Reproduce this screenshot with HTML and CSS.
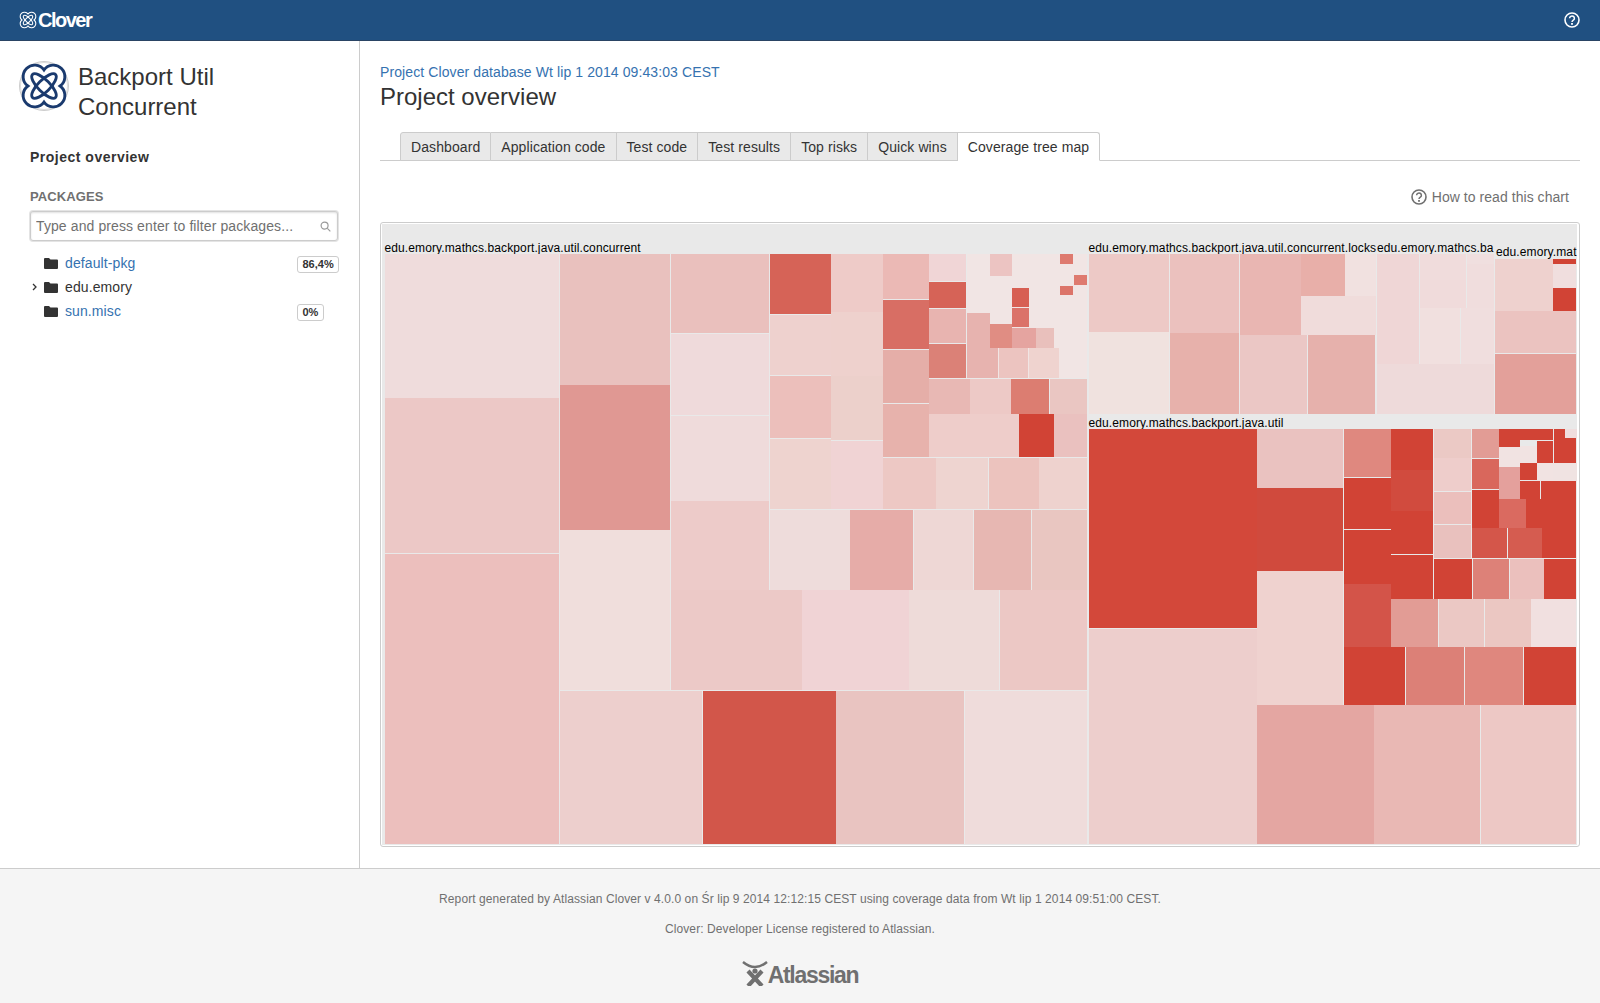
FILE: index.html
```html
<!DOCTYPE html>
<html lang="en">
<head>
    <meta charset="UTF-8">
    <title>Coverage tree map</title>
    <link rel="stylesheet" href="styles.css">
</head>
<body>
    <svg class="defs" width="0" height="0">
        <symbol id="clover" viewBox="-25 -25 50 50">
            <g fill="none" stroke="currentColor">
                <path d="M0 -16.75A12 12 0 1 1 16.75 0A12 12 0 1 1 0 16.75A12 12 0 1 1 -16.75 0A12 12 0 1 1 0 -16.75Z"/>
                <ellipse rx="6.2" ry="17" transform="rotate(45)"/>
                <ellipse rx="6.2" ry="17" transform="rotate(-45)"/>
            </g>
        </symbol>
        <symbol id="help" viewBox="0 0 16 16">
            <circle cx="8" cy="8" r="7" fill="none" stroke="currentColor" stroke-width="1.6"/>
            <path d="M5.6 6.3a2.4 2.3 0 1 1 3.7 1.9c-.9.6-1.3 1-1.3 1.9" fill="none" stroke="currentColor" stroke-width="1.5"/>
            <rect x="7.1" y="11" width="1.8" height="1.8" fill="currentColor"/>
        </symbol>
        <symbol id="folder" viewBox="0 0 14 11">
            <path d="M0 1a1 1 0 0 1 1-1h4l1.5 1.6H13a1 1 0 0 1 1 1V10a1 1 0 0 1-1 1H1a1 1 0 0 1-1-1Z" fill="currentColor"/>
        </symbol>
    </svg>

    <header class="topbar">
        <a class="brand">
            <svg class="brand-icon"><use href="#clover"/></svg>
            <span class="brand-name">Clover</span>
        </a>
        <svg class="topbar-help"><use href="#help"/></svg>
    </header>

    <div class="layout">
        <aside class="sidebar">
            <div class="project">
                <span class="project-logo"><svg><use href="#clover"/></svg></span>
                <h1 class="project-name">Backport Util Concurrent</h1>
            </div>
            <div class="side-link">Project overview</div>
            <h2 class="side-heading">PACKAGES</h2>
            <div class="filter">
                <input type="text" placeholder="Type and press enter to filter packages...">
                <svg class="filter-icon" viewBox="0 0 12 12">
                    <circle cx="5" cy="5" r="3.8"/>
                    <path d="M8 8l3.3 3.3"/>
                </svg>
            </div>
            <ul class="tree">
                <li class="tree-row">
                    <span class="tree-arrow"></span>
                    <svg class="tree-folder"><use href="#folder"/></svg>
                    <a class="tree-link">default-pkg</a>
                    <span class="badge">86,4%</span>
                </li>
                <li class="tree-row">
                    <span class="tree-arrow">
                        <svg viewBox="0 0 5 8"><path d="M1 1l3 3-3 3"/></svg>
                    </span>
                    <svg class="tree-folder"><use href="#folder"/></svg>
                    <span class="tree-text">edu.emory</span>
                </li>
                <li class="tree-row">
                    <span class="tree-arrow"></span>
                    <svg class="tree-folder"><use href="#folder"/></svg>
                    <a class="tree-link">sun.misc</a>
                    <span class="badge">0%</span>
                </li>
            </ul>
        </aside>

        <main class="content">
            <a class="db-link">Project Clover database Wt lip 1 2014 09:43:03 CEST</a>
            <h1 class="page-title">Project overview</h1>
            <nav class="tabs">
                <a class="tab">Dashboard</a>
                <a class="tab">Application code</a>
                <a class="tab">Test code</a>
                <a class="tab">Test results</a>
                <a class="tab">Top risks</a>
                <a class="tab">Quick wins</a>
                <a class="tab active">Coverage tree map</a>
            </nav>
            <div class="chart-help">
                <svg><use href="#help"/></svg>
                <span>How to read this chart</span>
            </div>
            <div class="chart">
                <div class="treemap" id="treemap"></div>
            </div>
        </main>
    </div>

    <footer class="footer">
        <p>Report generated by Atlassian Clover v 4.0.0 on Śr lip 9 2014 12:12:15 CEST using coverage data from Wt lip 1 2014 09:51:00 CEST.</p>
        <p>Clover: Developer License registered to Atlassian.</p>
        <div class="atlassian">
            <svg viewBox="0 0 26 25">
                <path d="M1 1Q13 11 25 1" fill="none" stroke="currentColor" stroke-width="2.4"/>
                <circle cx="13" cy="10" r="2.6" fill="currentColor"/>
                <path d="M6 10L20 25M20 10L6 25" stroke="currentColor" stroke-width="4.2"/>
            </svg>
            <span>Atlassian</span>
        </div>
    </footer>

    <script src="treemap.js"></script>
</body>
</html>
```

FILE: styles.css
```css
* { box-sizing: border-box; }
body {
    margin: 0;
    min-height: 100vh;
    display: flex;
    flex-direction: column;
    font-family: 'Liberation Sans', Arial, sans-serif;
    font-size: 14px;
    letter-spacing: 0.1px;
    color: #333;
    background: white;
}
.defs { position: absolute; }

.topbar {
    height: 41px;
    display: flex;
    align-items: center;
    justify-content: space-between;
    padding: 0 20px 0 19px;
    background: #205081;
    border-bottom: 1px solid #2a4464;
    color: white;
}
.brand { display: flex; align-items: center; gap: 1px; }
.brand-icon { width: 18px; height: 18px; stroke-width: 3; }
.brand-name { font-size: 20px; font-weight: bold; letter-spacing: -1.5px; }
.topbar-help { width: 16px; height: 16px; }

.layout { flex: 1; display: flex; }
.sidebar {
    width: 360px;
    padding: 20px 20px 0 19px;
    border-right: 1px solid #ccc;
}
.project { display: flex; gap: 9px; }
.project-logo {
    width: 50px;
    height: 50px;
    flex: none;
    border: 1px solid #ccc;
    border-radius: 50%;
    box-shadow: inset 0 0 0 1px #ddd;
    color: #1a3a6e;
    stroke-width: 3;
}
.project-logo svg { display: block; width: 48px; height: 48px; }
.project-name {
    margin: 1px 0 0;
    width: 190px;
    font-size: 24px;
    font-weight: normal;
    line-height: 30px;
    letter-spacing: 0;
}
.side-link {
    margin: 25px 0 0 11px;
    font-weight: bold;
    line-height: 20px;
    letter-spacing: 0.5px;
}
.side-heading {
    margin: 21px 0 0 11px;
    font-size: 13px;
    line-height: 18px;
    color: #707070;
}
.filter { position: relative; margin: 5px 0 0 11px; width: 308px; }
.filter input {
    display: block;
    width: 100%;
    height: 30px;
    padding: 0 5px;
    border: 1px solid #ccc;
    border-radius: 3px;
    box-shadow: inset 0 1px 2px rgba(0, 0, 0, 0.12), 0 0 0 1px #e4e4e4;
    font-family: inherit;
    font-size: 14px;
    letter-spacing: 0.1px;
}
.filter input::placeholder { color: #707070; opacity: 1; }
.filter-icon {
    position: absolute;
    right: 7px;
    top: 10px;
    width: 11px;
    height: 11px;
    fill: none;
    stroke: #999;
    stroke-width: 1.3;
}
.tree { list-style: none; margin: 10px 0 0; padding: 0; }
.tree-row { display: flex; align-items: center; height: 24px; }
.tree-arrow { width: 25px; padding-left: 13px; display: flex; }
.tree-arrow svg { width: 5px; height: 8px; fill: none; stroke: #333; stroke-width: 1.3; }
.tree-folder { width: 14px; height: 11px; color: #333; margin-right: 7px; }
.tree-link { color: #3572b0; }
.tree-text { color: #333; }
.badge {
    position: absolute;
    left: 297px;
    margin-top: 2px;
    padding: 0 4.5px;
    height: 17px;
    border: 1px solid #ccc;
    border-radius: 3px;
    background: white;
    font-size: 11px;
    font-weight: bold;
    line-height: 15px;
    letter-spacing: 0;
}

.content { flex: 1; padding: 21px 20px 21px 20px; min-width: 0; }
.db-link { display: block; color: #3572b0; line-height: 20px; }
.page-title {
    margin: 0;
    font-size: 24px;
    font-weight: normal;
    line-height: 30px;
    letter-spacing: 0;
}
.tabs {
    display: flex;
    margin-top: 20px;
    padding-left: 20px;
    border-bottom: 1px solid #ccc;
    height: 29px;
}
.tab {
    height: 29px;
    padding: 0 10px;
    background: #e9e9e9;
    border: 1px solid #ccc;
    border-left-width: 0;
    line-height: 28px;
    letter-spacing: 0.09px;
    color: #333;
}
.tab:first-child { border-left-width: 1px; border-top-left-radius: 3px; }
.tab:last-child { border-top-right-radius: 3px; }
.tab.active { background: white; border-bottom-color: white; }
.chart-help {
    display: flex;
    justify-content: flex-end;
    align-items: center;
    gap: 5px;
    height: 20px;
    margin-top: 26px;
    padding-right: 11px;
    letter-spacing: 0.05px;
    color: #707070;
}
.chart-help svg { width: 16px; height: 16px; }
.chart {
    height: 625px;
    margin-top: 15px;
    padding: 1px 2px 1px 1px;
    border: 1px solid #ccc;
    border-radius: 3px;
}
.treemap {
    position: relative;
    height: 100%;
    overflow: hidden;
    background: #e9e9e9;
}
.tm-label {
    position: absolute;
    height: 14px;
    white-space: nowrap;
    font-size: 12px;
    line-height: 14px;
    letter-spacing: 0.11px;
    color: black;
}
.tm-cell { position: absolute; }

.footer {
    height: 135px;
    padding-top: 23px;
    background: #f5f5f5;
    border-top: 1px solid #ccc;
    text-align: center;
    font-size: 12px;
    line-height: 14px;
    letter-spacing: 0.09px;
    color: #707070;
}
.footer p { margin: 0 0 16px; }
.atlassian {
    display: inline-flex;
    align-items: flex-end;
    margin-top: 9px;
    color: #707070;
}
.atlassian svg { width: 26px; height: 25px; }
.atlassian span {
    font-size: 23px;
    font-weight: bold;
    line-height: 22px;
    letter-spacing: -1.3px;
}
```

FILE: treemap.js
```js
// all coordinates are page pixels: x1, y1, x2, y2, colour
const ORIGIN_X = 382;
const ORIGIN_Y = 224;

const labels = [
    [384.5, 241, 'edu.emory.mathcs.backport.java.util.concurrent'],
    [1088.5, 241, 'edu.emory.mathcs.backport.java.util.concurrent.locks'],
    [1377, 241, 'edu.emory.mathcs.ba'],
    [1496, 245, 'edu.emory.mat'],
    [1088.5, 416, 'edu.emory.mathcs.backport.java.util']
];

const cells = [
    // concurrent, big columns
    [385, 254, 559, 398, '#efdcdc'],
    [385, 398, 559, 553, '#ecc8c6'],
    [385, 554, 559, 844, '#ecbfbd'],
    [560, 254, 670, 385, '#e9c1be'],
    [560, 385, 670, 530, '#e09893'],
    [560, 530, 670, 690, '#f0dedc'],
    [671, 254, 769, 333, '#eac0bd'],
    [671, 334, 769, 415, '#efdadb'],
    [671, 416, 769, 501, '#efdbdb'],
    [671, 501, 769, 590, '#edcbc9'],
    [671, 590, 802, 690, '#ecc9c7'],
    [802, 590, 909, 690, '#f0d3d5'],
    [909, 590, 999, 690, '#eedbd9'],
    [1000, 590, 1087, 690, '#ecc8c5'],
    [560, 691, 702, 844, '#edcfcd'],
    [703, 691, 836, 844, '#d2564a'],
    [836, 691, 964, 844, '#e9c4c1'],
    [965, 691, 1087, 844, '#efdcdb'],
    [770, 510, 850, 590, '#eedcdb'],
    [850, 510, 913, 590, '#e6aca8'],
    [914, 510, 973, 590, '#eed7d5'],
    [974, 510, 1031, 590, '#e7b7b2'],
    [1032, 510, 1087, 590, '#e9c6c1'],

    // concurrent, middle
    [770, 254, 831, 314, '#d66357'],
    [770, 315, 831, 375, '#eed1ce'],
    [770, 376, 831, 438, '#ecbfbb'],
    [770, 439, 831, 509, '#eed3cf'],
    [831, 254, 883, 312, '#eecbc8'],
    [831, 312, 883, 376, '#eed1cd'],
    [831, 376, 883, 440, '#ecd0cb'],
    [831, 441, 883, 509, '#f0d3d4'],
    [883, 254, 929, 299, '#ebb9b5'],
    [883, 300, 929, 349, '#d86e64'],
    [883, 350, 929, 403, '#e5aea8'],
    [883, 404, 929, 457, '#e7b2ac'],
    [929, 254, 966, 281, '#f0d5d6'],
    [929, 282, 966, 308, '#d66357'],
    [929, 309, 966, 343, '#e8b4b0'],
    [929, 344, 966, 378, '#db8177'],

    // concurrent, smallest classes
    [967, 254, 1087, 378, '#f1e5e4'],
    [990, 254, 1012, 276, '#ecc4c2'],
    [1012, 288, 1029, 307, '#d75f53'],
    [1012, 308, 1029, 327, '#db7269'],
    [1060, 254, 1073, 264, '#de7a6f'],
    [1074, 275, 1087, 285, '#de7a6f'],
    [1060, 286, 1073, 295, '#dc7469'],
    [967, 313, 990, 348, '#e7b3af'],
    [967, 348, 998, 378, '#e7b3af'],
    [990, 324, 1012, 348, '#e08d83'],
    [1012, 328, 1036, 348, '#e5a4a0'],
    [1036, 328, 1054, 348, '#e9c0bc'],
    [999, 348, 1028, 378, '#ecc4c0'],
    [1029, 348, 1059, 378, '#efd3cf'],
    [929, 379, 970, 414, '#e8b8b4'],
    [970, 379, 1011, 414, '#edc9c6'],
    [1011, 379, 1049, 414, '#dc7d71'],
    [1050, 379, 1087, 414, '#eac6c2'],
    [929, 414, 1019, 457, '#eecdca'],
    [1019, 414, 1054, 457, '#d14335'],
    [1054, 414, 1087, 457, '#eac1bf'],
    [883, 458, 936, 509, '#edc8c4'],
    [936, 458, 988, 509, '#eed4d0'],
    [989, 458, 1039, 509, '#ecc3be'],
    [1039, 458, 1087, 509, '#eed2ce'],

    // locks
    [1089, 254, 1169, 332, '#edc9c6'],
    [1089, 332, 1169, 414, '#f0e2df'],
    [1170, 254, 1239, 333, '#ebc1be'],
    [1170, 333, 1239, 414, '#e7b1ab'],
    [1240, 254, 1301, 335, '#e9b6b2'],
    [1301, 254, 1345, 296, '#e8afa9'],
    [1345, 254, 1376, 296, '#f1e1e0'],
    [1301, 296, 1376, 335, '#f0dcdb'],
    [1240, 335, 1307, 414, '#ebc7c5'],
    [1308, 335, 1375, 414, '#e6b1ac'],

    // backport
    [1377, 254, 1419, 364, '#efd6d6'],
    [1420, 254, 1466, 280, '#f0dcdc'],
    [1420, 280, 1466, 308, '#f0dbdb'],
    [1467, 254, 1494, 264, '#f0dfdf'],
    [1467, 264, 1494, 308, '#f0dddd'],
    [1420, 308, 1460, 364, '#f1e0df'],
    [1461, 308, 1494, 364, '#f0dede'],
    [1377, 364, 1494, 414, '#eedada'],

    // edu.emory.mat...
    [1495, 259, 1553, 311, '#eed1ce'],
    [1553, 259, 1576, 264, '#d14335'],
    [1553, 264, 1576, 288, '#f0dede'],
    [1553, 288, 1576, 311, '#d14335'],
    [1495, 311, 1576, 353, '#ebc3c0'],
    [1495, 354, 1576, 414, '#e3a09a'],

    // util
    [1089, 429, 1257, 628, '#d3483a'],
    [1089, 629, 1257, 844, '#edcecc'],
    [1257, 429, 1343, 488, '#eac2c0'],
    [1257, 488, 1343, 571, '#d04a3d'],
    [1257, 571, 1343, 705, '#efd2cf'],
    [1344, 429, 1391, 477, '#df887f'],
    [1344, 478, 1391, 529, '#d14335'],
    [1344, 530, 1391, 584, '#d14335'],
    [1344, 584, 1391, 647, '#d35449'],
    [1391, 429, 1433, 470, '#d14335'],
    [1391, 470, 1433, 511, '#d14b3e'],
    [1391, 511, 1433, 554, '#d14335'],
    [1391, 555, 1433, 599, '#d14335'],
    [1434, 429, 1471, 458, '#ebc9c5'],
    [1434, 458, 1471, 491, '#eecdcb'],
    [1434, 492, 1471, 524, '#ebbfbc'],
    [1434, 525, 1471, 558, '#e9c1be'],
    [1472, 429, 1499, 458, '#e29c95'],
    [1472, 459, 1499, 489, '#d9675c'],
    [1472, 490, 1499, 528, '#d14335'],
    [1499, 429, 1553, 440, '#d14335'],
    [1499, 440, 1520, 447, '#d14335'],
    [1499, 447, 1520, 467, '#f1e3e2'],
    [1520, 446, 1537, 463, '#f1e3e2'],
    [1537, 441, 1553, 463, '#d14335'],
    [1554, 429, 1565, 438, '#d14335'],
    [1565, 429, 1577, 438, '#f0dede'],
    [1554, 438, 1576, 463, '#d14335'],
    [1520, 463, 1537, 480, '#d14335'],
    [1537, 463, 1553, 481, '#f1e3e2'],
    [1553, 463, 1577, 481, '#f0e3e2'],
    [1499, 467, 1520, 499, '#e4a09c'],
    [1499, 499, 1526, 528, '#da6a60'],
    [1520, 481, 1540, 499, '#d14335'],
    [1541, 481, 1576, 499, '#d14335'],
    [1526, 499, 1576, 528, '#d14335'],
    [1472, 528, 1507, 558, '#d4564a'],
    [1508, 528, 1542, 558, '#d55c50'],
    [1542, 528, 1576, 558, '#d14335'],
    [1434, 559, 1472, 599, '#d14335'],
    [1473, 559, 1509, 599, '#dd8178'],
    [1510, 559, 1544, 599, '#ebc0bd'],
    [1544, 559, 1576, 599, '#d14335'],
    [1391, 599, 1438, 647, '#e29c95'],
    [1439, 599, 1484, 647, '#ebc8c4'],
    [1485, 599, 1531, 647, '#ebc7c2'],
    [1531, 599, 1576, 647, '#f1e0e0'],
    [1344, 647, 1405, 705, '#d14335'],
    [1406, 647, 1464, 705, '#dc8077'],
    [1465, 647, 1523, 705, '#df877e'],
    [1524, 647, 1576, 705, '#d14335'],
    [1257, 705, 1374, 844, '#e4a6a2'],
    [1374, 705, 1480, 844, '#e9b8b4'],
    [1481, 705, 1576, 844, '#edc8c5']
];

const treemap = document.getElementById('treemap');

// labels go in first so the cells cut off their descenders
labels.forEach(([x, y, text]) => {
    const label = document.createElement('div');
    label.className = 'tm-label';
    label.textContent = text;
    label.style.left = (x - ORIGIN_X) + 'px';
    label.style.top = (y - ORIGIN_Y) + 'px';
    treemap.appendChild(label);
});

cells.forEach(([x1, y1, x2, y2, colour]) => {
    const cell = document.createElement('div');
    cell.className = 'tm-cell';
    cell.style.left = (x1 - ORIGIN_X) + 'px';
    cell.style.top = (y1 - ORIGIN_Y) + 'px';
    cell.style.width = (x2 - x1) + 'px';
    cell.style.height = (y2 - y1) + 'px';
    cell.style.background = colour;
    treemap.appendChild(cell);
});
```
